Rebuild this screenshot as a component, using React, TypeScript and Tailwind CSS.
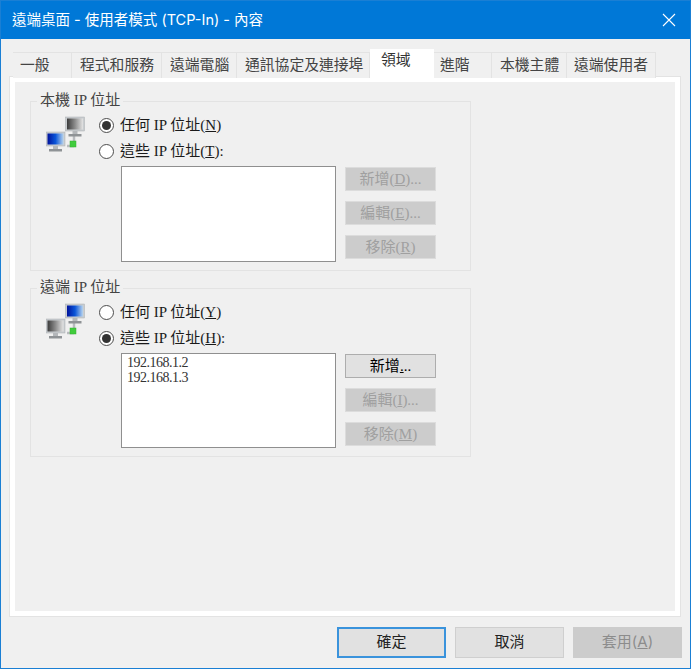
const CJK = "font-['Liberation_Serif','Noto_Sans_CJK_TC',serif]";

function NetIcon({ swap }: { swap?: boolean }) {
  const blue = "url(#netBlue)";
  const grey = "url(#netGrey)";
  const Mon = ({ x, y, fill }: { x: number; y: number; fill: string }) => (
    <g>
      <rect x={x} y={y} width={19} height={14} fill="#c9cdd0" stroke="#a9adb0" strokeWidth={0.5} />
      <rect x={x + 1.5} y={y + 1.5} width={16} height={11} fill={fill} />
      <rect x={x + 7} y={y + 14} width={5} height={3} fill="#b4b7ba" />
      <rect x={x + 3} y={y + 17} width={13} height={2.5} fill="#8f9396" />
    </g>
  );
  return (
    <svg width="40" height="38" viewBox="0 0 40 38" className="shrink-0">
      <defs>
        <linearGradient id="netBlue" x1="0" x2="1" y1="0" y2="0">
          <stop offset="0" stopColor="#00129c" />
          <stop offset="0.5" stopColor="#0a55d8" />
          <stop offset="1" stopColor="#b8d4ee" />
        </linearGradient>
        <linearGradient id="netGrey" x1="0" x2="1" y1="0" y2="0">
          <stop offset="0" stopColor="#3c3c3c" />
          <stop offset="0.5" stopColor="#8c8c8c" />
          <stop offset="1" stopColor="#e4e4e4" />
        </linearGradient>
      </defs>
      <path d="M28 19v7M21 30h7" stroke="#b8bbbe" strokeWidth="2.5" fill="none" />
      <Mon x={19.5} y={1} fill={swap ? blue : grey} />
      <Mon x={0} y={16} fill={swap ? grey : blue} />
      <rect x="24" y="25" width="6" height="6" fill="#40cc3c" stroke="#34ad30" strokeWidth="0.5" />
    </svg>
  );
}

function Radio({ checked, children }: { checked?: boolean; children: React.ReactNode }) {
  return (
    <div className="flex items-center h-[17px] gap-[6px]">
      <span className="w-[15px] h-[15px] rounded-full border border-[#4d4d4d] bg-white flex items-center justify-center shrink-0">
        {checked && <span className="w-[9px] h-[9px] rounded-full bg-[#333333]" />}
      </span>
      <span className="text-[15px] leading-[17px] text-[#1a1a1a] whitespace-nowrap">{children}</span>
    </div>
  );
}

function Btn({ children, disabled }: { children: React.ReactNode; disabled?: boolean }) {
  return (
    <div
      className={
        "w-[91px] h-[24px] flex items-center justify-center text-[15px] whitespace-nowrap border " +
        (disabled
          ? "bg-[#cccccc] border-[#dcdcdc] text-[#a0a0a0]"
          : "bg-[#e1e1e1] border-[#adadad] text-black")
      }
    >
      {children}
    </div>
  );
}

function Group({
  title,
  top,
  h,
  children,
}: {
  title: string;
  top: string;
  h: string;
  children: React.ReactNode;
}) {
  return (
    <div className={"relative w-[441px] border border-[#e3e3e3] " + top + " " + h}>
      <span className="absolute left-[6px] -top-[11px] px-[3px] bg-[#f0f0f0] text-[15px] leading-[18px] text-[#444444] whitespace-nowrap">
        {title}
      </span>
      {children}
    </div>
  );
}

function Section({
  swap,
  a,
  b,
  aChecked,
  list,
  listH,
  buttons,
}: {
  swap?: boolean;
  a: React.ReactNode;
  b: React.ReactNode;
  aChecked?: boolean;
  list: string[];
  listH: string;
  buttons: { label: React.ReactNode; disabled?: boolean }[];
}) {
  return (
    <div className="flex pl-[15px] pt-[14px]">
      <div className="w-[53px] shrink-0">
        <NetIcon swap={swap} />
      </div>
      <div className="flex flex-col pt-[1px]">
        <div className="flex flex-col gap-[9px]">
          <Radio checked={aChecked}>{a}</Radio>
          <Radio checked={!aChecked}>{b}</Radio>
        </div>
        <div className="flex mt-[6px] ml-[22px]">
          <div
            className={
              "w-[215px] bg-white border border-[#8f8f8f] pl-[5px] pt-[1px] text-[14px] leading-[15px] tracking-[-0.5px] text-[#333333] font-['Liberation_Serif',serif] " +
              listH
            }
          >
            {list.map((l) => (
              <div key={l}>{l}</div>
            ))}
          </div>
          <div className="flex flex-col gap-[10px] ml-[9px] pt-[1px]">
            {buttons.map((b, i) => (
              <Btn key={i} disabled={b.disabled}>
                {b.label}
              </Btn>
            ))}
          </div>
        </div>
      </div>
    </div>
  );
}

const U = ({ children }: { children: React.ReactNode }) => <span className="underline">{children}</span>;

const tabs: { label: string; w: string; active?: boolean }[] = [
  { label: "一般", w: "w-[59px] pl-[7px]" },
  { label: "程式和服務", w: "w-[90px] pl-[8px]" },
  { label: "遠端電腦", w: "w-[75px] pl-[8px]" },
  { label: "通訊協定及連接埠", w: "w-[133px] pl-[8px]" },
  { label: "領域", w: "w-[64px] pl-[11px]", active: true },
  { label: "進階", w: "w-[58px] pl-[6px]" },
  { label: "本機主體", w: "w-[75px] pl-[8px]" },
  { label: "遠端使用者", w: "w-[89px] pl-[7px]" },
];

export default function App() {
  return (
    <div className={"w-[691px] h-[669px] bg-[#f0f0f0] border border-[#1a7fd4] flex flex-col overflow-hidden " + CJK}>
      <div className="h-[38px] shrink-0 bg-[#0078d7] flex items-center justify-between pl-[11px] pr-[14px]">
        <span className="text-[14.5px] text-white font-['Inter','Noto_Sans_CJK_TC',sans-serif] whitespace-nowrap">
          遠端桌面 - 使用者模式 (TCP-In) - 內容
        </span>
        <svg width="14" height="14" viewBox="0 0 14 14" stroke="white" strokeWidth="1.1" fill="none">
          <path d="M1 1l12 12M13 1L1 13" />
        </svg>
      </div>

      <div className="flex-1 flex flex-col px-[9px]">
        <div className="flex items-end h-[39px] pl-[3px] shrink-0 relative z-10 -mb-[1px]">
          {tabs.map((t) => (
            <div
              key={t.label}
              className={
                "flex items-center whitespace-nowrap text-[14.8px] border-r border-t border-[#e3e3e3] " +
                t.w +
                (t.active
                  ? " h-[29px] bg-white border-transparent pb-[8px] text-[#333333]"
                  : " h-[26px] bg-[#f0f0f0] text-[#444444]")
              }
            >
              {t.label}
            </div>
          ))}
        </div>

        <div className="w-[670px] h-[539px] shrink-0 border-[5px] border-white bg-[#f0f0f0] outline outline-1 outline-[#e3e3e3] pl-[15px] pt-[19px]">
          <Group title="本機 IP 位址" top="" h="h-[170px]">
            <Section
              aChecked
              a={<>任何 IP 位址(<U>N</U>)</>}
              b={<>這些 IP 位址(<U>T</U>):</>}
              list={[]}
              listH="h-[96px]"
              buttons={[
                { label: <>新增(<U>D</U>)...</>, disabled: true },
                { label: <>編輯(<U>E</U>)...</>, disabled: true },
                { label: <>移除(<U>R</U>)</>, disabled: true },
              ]}
            />
          </Group>
          <Group title="遠端 IP 位址" top="mt-[17px]" h="h-[169px]">
            <Section
              swap
              a={<>任何 IP 位址(<U>Y</U>)</>}
              b={<>這些 IP 位址(<U>H</U>):</>}
              list={["192.168.1.2", "192.168.1.3"]}
              listH="h-[95px]"
              buttons={[
                { label: <>新增<U>.</U>..</> },
                { label: <>編輯(<U>I</U>)...</>, disabled: true },
                { label: <>移除(<U>M</U>)</>, disabled: true },
              ]}
            />
          </Group>
        </div>

        <div className="flex justify-end gap-[9px] pt-[11px] -mr-[1px] font-['Inter','Noto_Sans_CJK_TC',sans-serif] text-[15px]">
          <div className="w-[109px] h-[31px] flex items-center justify-center bg-[#e1e1e1] border-2 border-[#3a93dc] text-[#222222]">
            確定
          </div>
          <div className="w-[109px] h-[31px] flex items-center justify-center bg-[#e1e1e1] border border-[#cfcfcf] text-[#222222]">
            取消
          </div>
          <div className="w-[109px] h-[31px] flex items-center justify-center bg-[#cccccc] text-[#8c8c8c]">
            套用(<U>A</U>)
          </div>
        </div>
      </div>
    </div>
  );
}
